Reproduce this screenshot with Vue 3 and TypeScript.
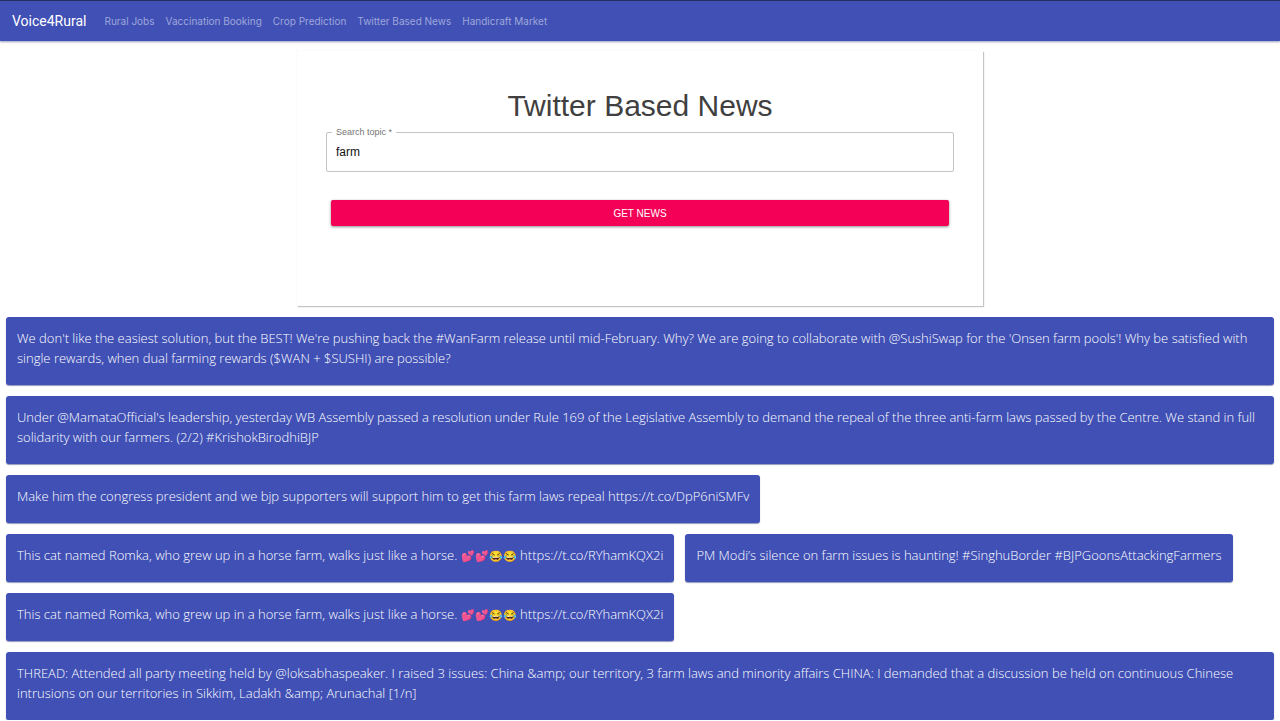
<script setup lang="ts">
import { ref } from 'vue'

interface Tweet {
  id: number
  text: string
  emoji?: string
  link?: string
}

const links: string[] = [
  'Rural Jobs',
  'Vaccination Booking',
  'Crop Prediction',
  'Twitter Based News',
  'Handicraft Market',
]

const topic = ref('farm')

const tweets: Tweet[] = [
  { id: 1, text: "We don't like the easiest solution, but the BEST! We're pushing back the #WanFarm release until mid-February. Why? We are going to collaborate with @SushiSwap for the 'Onsen farm pools'! Why be satisfied with single rewards, when dual farming rewards ($WAN + $SUSHI) are possible?" },
  { id: 2, text: "Under @MamataOfficial's leadership, yesterday WB Assembly passed a resolution under Rule 169 of the Legislative Assembly to demand the repeal of the three anti-farm laws passed by the Centre. We stand in full solidarity with our farmers. (2/2) #KrishokBirodhiBJP" },
  { id: 3, text: 'Make him the congress president and we bjp supporters will support him to get this farm laws repeal https://t.co/DpP6niSMFv' },
  { id: 4, text: 'This cat named Romka, who grew up in a horse farm, walks just like a horse. ', emoji: '💕💕😂😂', link: ' https://t.co/RYhamKQX2i' },
  { id: 5, text: 'PM Modi’s silence on farm issues is haunting! #SinghuBorder #BJPGoonsAttackingFarmers' },
  { id: 6, text: 'This cat named Romka, who grew up in a horse farm, walks just like a horse. ', emoji: '💕💕😂😂', link: ' https://t.co/RYhamKQX2i' },
  { id: 7, text: 'THREAD: Attended all party meeting held by @loksabhaspeaker. I raised 3 issues: China &amp; our territory, 3 farm laws and minority affairs CHINA: I demanded that a discussion be held on continuous Chinese intrusions on our territories in Sikkim, Ladakh &amp; Arunachal [1/n]' },
]
</script>

<template>
  <div class="page">
    <nav class="navbar">
      <a class="brand" href="#">Voice4Rural</a>
      <a v-for="link in links" :key="link" class="nav-link" href="#">{{ link }}</a>
    </nav>

    <main>
      <form class="card" @submit.prevent>
        <h1 class="title">Twitter Based News</h1>
        <div class="field">
          <label class="label" for="topic">Search topic *</label>
          <input id="topic" v-model="topic" class="input" type="text" required />
        </div>
        <button class="submit" type="submit">GET NEWS</button>
      </form>

      <section class="tweets">
        <article v-for="tweet in tweets" :key="tweet.id" class="tweet">{{ tweet.text }}<span v-if="tweet.emoji" class="emoji">{{ tweet.emoji }}</span>{{ tweet.link }}</article>
      </section>
    </main>
  </div>
</template>

<style>
body {
  margin: 0;
  background: #fff;
}
</style>

<style scoped>
.page {
  font-family: Inter, Roboto, sans-serif;
}

.navbar {
  display: flex;
  align-items: center;
  gap: 11px;
  height: 40px;
  padding: 0 12px;
  border-top: 1px solid #26305f;
  background: #4050b5;
  box-shadow: 0 1px 2px rgba(40, 60, 140, 0.5);
}

.brand {
  margin-right: 7px;
  color: #fff;
  font-family: Roboto, sans-serif;
  font-size: 14px;
  text-decoration: none;
}

.nav-link {
  color: #9fa7da;
  font-size: 10px;
  text-decoration: none;
}

.card {
  box-sizing: border-box;
  max-width: 686px;
  min-height: 255px;
  margin: 10px auto 11px;
  padding: 36px 29px 29px;
  box-shadow: 1px 1px 1px #c4c4c8, 0 0 1px #e4e4e4;
  font-family: "Liberation Sans", Arial, sans-serif;
}

.title {
  margin: 0;
  color: #404040;
  font-size: 30px;
  font-weight: 400;
  line-height: 38px;
  text-align: center;
}

.field {
  position: relative;
  margin-top: 7px;
}

.label {
  position: absolute;
  top: -6px;
  left: 6px;
  padding: 0 4px;
  background: #fff;
  color: #757575;
  font-size: 9px;
  line-height: 12px;
}

.input {
  box-sizing: border-box;
  display: block;
  width: 100%;
  height: 40px;
  padding: 0 9px;
  border: 1px solid #c4c4c4;
  border-radius: 2px;
  background: #fff;
  color: #111;
  font-family: inherit;
  font-size: 12px;
  outline: none;
}

.submit {
  display: block;
  width: calc(100% - 10px);
  height: 26px;
  margin: 28px auto 0;
  padding: 0;
  border: 0;
  border-radius: 2px;
  background: #f50057;
  box-shadow: 0 1px 3px rgba(0, 0, 0, 0.45);
  color: #fff;
  font-family: inherit;
  font-size: 10px;
}

.tweets {
  display: flex;
  flex-wrap: wrap;
  align-items: flex-start;
  gap: 11px;
  padding: 0 6px;
}

.tweet {
  box-sizing: border-box;
  padding: 11px 11px 17px;
  border-radius: 3px;
  background: #4050b5;
  box-shadow: 0 1px 1px rgba(40, 50, 120, 0.5);
  color: #fff;
  font-family: "Open Sans", sans-serif;
  font-size: 13px;
  font-weight: 300;
  line-height: 20px;
}

.emoji {
  font-size: 11px;
  line-height: 1;
}
</style>
